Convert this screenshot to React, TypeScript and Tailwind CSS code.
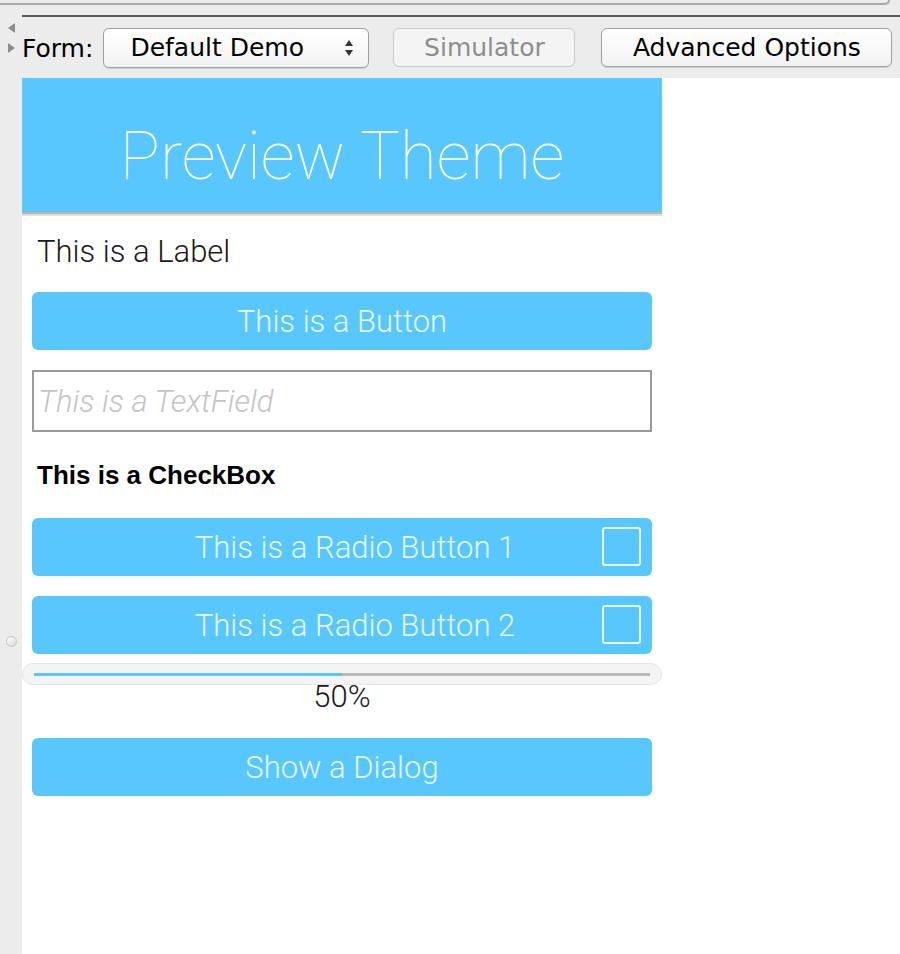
import React from "react";

const mac = { fontFamily: '"DejaVu Sans", "Liberation Sans", sans-serif' };
const thin = { fontFamily: 'Roboto, "Noto Sans", sans-serif' };

function ThemeButton({ label, box }: { label: string; box?: boolean }) {
  return (
    <div className={`relative flex h-[58px] items-center justify-center rounded-[6px] bg-[#57c7fd] ${box ? "pl-[26px]" : ""}`}>
      <span className="text-[31px] font-light leading-none text-[#e6f6ff]" style={thin}>
        {label}
      </span>
      {box && (
        <span className="absolute right-[11px] top-[9px] h-[39px] w-[39px] rounded-[3px] border-2 border-[#e9f7ff]" />
      )}
    </div>
  );
}

export default function App() {
  return (
    <div className="flex h-[954px] w-[900px] flex-col overflow-hidden bg-[#ececec]">
      {/* cropped field from the row above */}
      <div className="h-[17px]">
        <div className="h-[5px] w-[890px] rounded-br-[6px] border-b-2 border-r-2 border-[#a9a9a9]" />
        <div className="ml-[22px] mt-[10px] h-[2px] bg-[#5c5c5c]" />
      </div>

      {/* toolbar */}
      <div className="flex h-[61px] items-center" style={mac}>
        <div className="flex w-[22px] flex-col items-center gap-[8px] self-stretch pt-[5px]">
          <svg width="11" height="12" viewBox="0 0 11 12">
            <path d="M9 1 L2 6 L9 11 Z" fill="#8c8c8c" />
          </svg>
          <svg width="11" height="12" viewBox="0 0 11 12">
            <path d="M2 1 L9 6 L2 11 Z" fill="#8c8c8c" />
          </svg>
        </div>
        <span className="mt-[2px] text-[25px] text-black">Form:</span>
        <div className="ml-[10px] flex h-[40px] w-[266px] items-center rounded-[6px] border border-[#a0a0a0] bg-gradient-to-b from-white to-[#f2f2f2] pl-[26px] pr-[14px] shadow-[0_1px_1px_rgba(0,0,0,0.12)]">
          <span className="flex-1 text-[25px] text-black">Default Demo</span>
          <svg width="10" height="20" viewBox="0 0 10 20">
            <path d="M5 2 L9 8 L1 8 Z" fill="#333" />
            <path d="M1 12 L9 12 L5 18 Z" fill="#333" />
          </svg>
        </div>
        <div className="ml-[24px] flex h-[39px] w-[182px] items-center justify-center rounded-[6px] border border-[#c8c8c8] bg-[#f4f4f4]">
          <span className="text-[25px] text-[#8e8e8e]">Simulator</span>
        </div>
        <div className="ml-[26px] flex h-[39px] w-[291px] items-center justify-center rounded-[6px] border border-[#a0a0a0] bg-gradient-to-b from-white to-[#f2f2f2] shadow-[0_1px_1px_rgba(0,0,0,0.12)]">
          <span className="text-[25px] text-black">Advanced Options</span>
        </div>
      </div>

      {/* body */}
      <div className="flex flex-1">
        <div className="flex w-[22px] flex-col items-center pt-[558px]">
          <span className="h-[11px] w-[11px] rounded-full border border-[#c4c4c4] bg-gradient-to-br from-white to-[#d8d8d8]" />
        </div>
        <div className="flex-1 bg-white">
          <div className="w-[640px]">
            <div className="flex h-[134px] items-center justify-center bg-[#57c7fd]">
              <span className="mt-[22px] text-[67px] font-thin leading-none text-white" style={thin}>
                Preview Theme
              </span>
            </div>
            <div className="h-[2px] bg-[#b5b5b5]" />
            <div className="h-[2px] bg-[#dedede]" />

            <div className="px-[10px]">
              <div className="flex h-[76px] items-center pb-[6px] pl-[5px] text-[31px] font-light leading-none text-[#1a1a1a]" style={thin}>
                This is a Label
              </div>
              <ThemeButton label="This is a Button" />
              <div className="mt-[20px] flex h-[62px] items-center border-2 border-[#9a9a9a] pl-[4px]">
                <span className="text-[31px] font-light italic leading-none text-[#c4c4c4]" style={thin}>
                  This is a TextField
                </span>
              </div>
              <div
                className="flex h-[86px] items-center pl-[5px] text-[26px] font-bold leading-none text-black"
                style={{ fontFamily: '"Liberation Sans", Arial, sans-serif' }}
              >
                This is a CheckBox
              </div>
              <ThemeButton label="This is a Radio Button 1" box />
              <div className="h-[20px]" />
              <ThemeButton label="This is a Radio Button 2" box />
            </div>

            <div className="mt-[9px] flex h-[22px] items-center rounded-full border border-[#e6e6e6] bg-[#f4f4f4] px-[11px]">
              <div className="flex h-[3px] flex-1">
                <div className="w-1/2 bg-[#57c7fd]" />
                <div className="flex-1 bg-[#b9b9b9]" />
              </div>
            </div>
            <div className="h-[24px] text-center text-[31px] font-light leading-[24px] text-[#1a1a1a]" style={thin}>
              50%
            </div>
            <div className="mt-[29px] px-[10px]">
              <ThemeButton label="Show a Dialog" />
            </div>
          </div>
        </div>
      </div>
    </div>
  );
}
